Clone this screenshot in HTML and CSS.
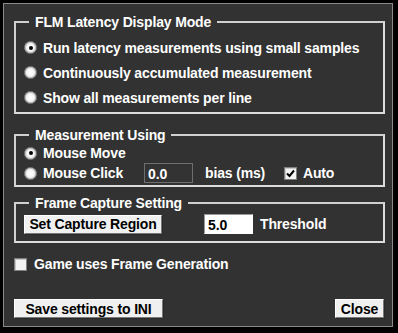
FILE: index.html
```html
<!DOCTYPE html>
<html>
<head>
<meta charset="utf-8">
<link rel="stylesheet" href="styles.css">
</head>
<body>
<div class="window">
  <fieldset class="group g1">
    <legend>FLM Latency Display Mode</legend>
    <div class="opt"><span class="radio checked"></span><span class="txt">Run latency measurements using small samples</span></div>
    <div class="opt"><span class="radio"></span><span class="txt">Continuously accumulated measurement</span></div>
    <div class="opt"><span class="radio"></span><span class="txt">Show all measurements per line</span></div>
  </fieldset>

  <fieldset class="group g2">
    <legend>Measurement Using</legend>
    <div class="opt short"><span class="radio checked"></span><span class="txt">Mouse Move</span></div>
    <div class="opt short">
      <span class="radio"></span><span class="txt fixed">Mouse Click</span>
      <span class="field dark">0.0</span>
      <span class="txt bias">bias (ms)</span>
      <span class="check on"><svg viewBox="0 0 11 11" width="11" height="11"><polyline points="2,5.5 4.5,8 9,2.5" fill="none" stroke="#000" stroke-width="2"/></svg></span>
      <span class="txt">Auto</span>
    </div>
  </fieldset>

  <fieldset class="group g3">
    <legend>Frame Capture Setting</legend>
    <div class="opt short">
      <span class="btn capture">Set Capture Region</span>
      <span class="field light">5.0</span>
      <span class="txt">Threshold</span>
    </div>
  </fieldset>

  <div class="opt short game"><span class="check"></span><span class="txt">Game uses Frame Generation</span></div>

  <div class="actions">
    <span class="btn save">Save settings to INI</span>
    <span class="btn close">Close</span>
  </div>
</div>
</body>
</html>
```

FILE: styles.css
```css
* { box-sizing: border-box; }
html, body {
  margin: 0;
  padding: 0;
  background: #000;
  width: 398px;
  height: 333px;
  overflow: hidden;
}
body {
  font-family: "Liberation Sans", Arial, sans-serif;
  font-weight: bold;
  font-size: 14px;
  letter-spacing: -0.15px;
  line-height: 16px;
  color: #fff;
}
.window {
  margin: 3px 0 0 3px;
  width: 390px;
  height: 324px;
  border: 1px solid #8a8a8a;
  background: #323232;
  padding: 0 7px 0 10px;
  display: flex;
  flex-direction: column;
}
.group {
  margin: 0;
  min-width: 0;
  border: 2px solid #dcdcdc;
  border-left-color: #d0d0d0;
  border-top-color: #d0d0d0;
  padding: 0 0 0 8px;
}
.group legend {
  margin-left: 5px;
  padding: 0 6px;
  line-height: 16px;
  height: 16px;
  color: #fff;
}
.g1 { margin-top: 10px; padding-top: 5px; padding-bottom: 2px; }
.g2 { margin-top: 13px; padding-top: 0; padding-bottom: 2px; }
.g3 { margin-top: 8px; padding-top: 3px; padding-bottom: 7px; }

.opt {
  display: flex;
  align-items: center;
  height: 25px;
}
.opt.short { height: 20px; }
.txt { white-space: nowrap; }
.radio {
  flex: none;
  width: 13px;
  height: 13px;
  border-radius: 50%;
  border: 1px solid #808080;
  background: radial-gradient(circle at 50% 50%, #ffffff 0, #f2f2f2 55%, #d4d4d4 100%);
  box-shadow: inset 0 0 0 1px #bdbdbd;
  margin-right: 6px;
  position: relative;
}
.radio.checked::after {
  content: "";
  position: absolute;
  left: 3.5px;
  top: 3.5px;
  width: 4px;
  height: 4px;
  border-radius: 50%;
  background: #000;
}
.fixed { width: 101px; flex: none; }
.field {
  flex: none;
  width: 49px;
  height: 20px;
  padding: 2px 0 0 3px;
  line-height: 16px;
}
.field.dark {
  background: #333;
  border: 1px solid #6e6e6e;
  color: #fff;
  margin-right: 12px;
}
.field.light {
  background: #fff;
  border: 1px solid #9a9a9a;
  border-right-color: #fff;
  border-bottom-color: #fff;
  color: #000;
  margin-left: 42px;
  margin-right: 7px;
}
.bias { width: 79px; flex: none; }
.check {
  flex: none;
  width: 13px;
  height: 13px;
  border: 1px solid #808080;
  background: #f4f4f4;
  box-shadow: inset 1px 1px 0 #c8c8c8;
  margin-right: 6px;
  display: flex;
  align-items: center;
  justify-content: center;
}
.check svg { display: block; }
.game { margin-top: 11px; }
.game .check { margin-right: 7px; }
.btn {
  flex: none;
  display: flex;
  align-items: center;
  justify-content: center;
  height: 19px;
  background: #f0f0f0;
  color: #000;
  border: 1px solid #fff;
  border-right-color: #7a7a7a;
  border-bottom-color: #7a7a7a;
  box-shadow: 1px 1px 0 #2a2a2a;
  white-space: nowrap;
}
.capture { width: 138px; }
.actions {
  margin-top: 25px;
  display: flex;
  justify-content: space-between;
  padding-right: 1px;
}
.save { width: 149px; }
.close { width: 49px; }
```
